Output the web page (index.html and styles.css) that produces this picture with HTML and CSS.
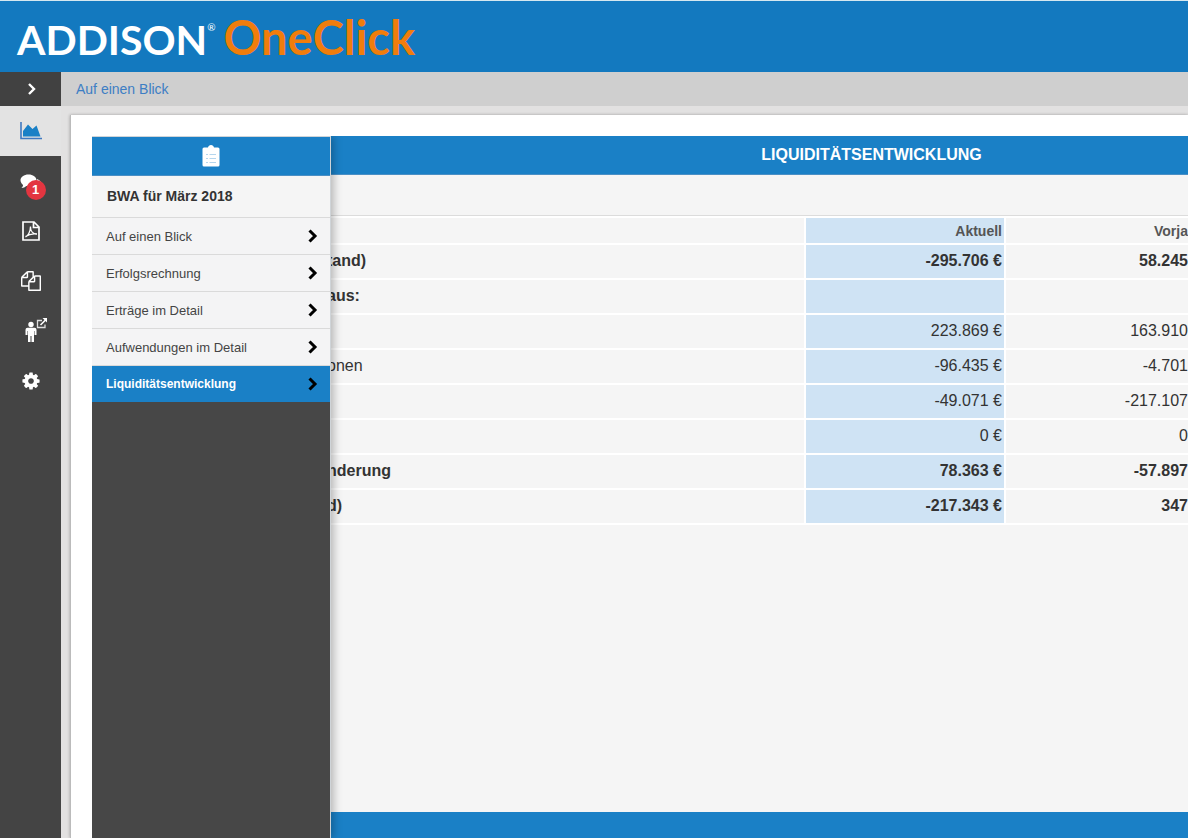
FILE: index.html
```html
<!DOCTYPE html>
<html lang="de">
<head>
<meta charset="utf-8">
<title>ADDISON OneClick</title>
<link rel="stylesheet" href="styles.css">
</head>
<body class="app">
<header class="brand">
  <span class="brand-name">ADDISON<sup class="brand-mark">®</sup></span>
  <span class="brand-product">OneClick</span>
</header>
<div class="shell">
  <nav class="rail" aria-label="Hauptnavigation">
    <button class="rail-toggle" type="button">
      <svg width="10" height="14" viewBox="0 0 10 14"><path d="M3 2l5 5-5 5" fill="none" stroke="#fff" stroke-width="2.400"/></svg>
    </button>
    <a class="rail-item rail-active" href="#">
      <svg width="22" height="18" viewBox="0 0 22 18"><path d="M1 0v16.500h21" fill="none" stroke="#3f78c0" stroke-width="1.600"/><path d="M3 14.500V9l5-6.500 4.500 4.500 4-3.500L20.500 14.500z" fill="#1a80c6"/></svg>
    </a>
    <a class="rail-item" href="#">
      <span class="chat">
        <svg width="22" height="20" viewBox="0 0 22 20"><path d="M17 5c3 1 4.500 3 4.500 5 0 2-1 3-2 4 0 1 1 2 1.500 3-2 0-3.500-1-4.500-1.800-3 .5-6-.2-8-1.700 5 0 9-3 8.500-8.500z" fill="#eee"/><path d="M8.500.5c4.500 0 8 2.500 8 5.800s-3.500 5.800-8 5.800c-.8 0-1.500 0-2.200-.2C5 13 3.500 13.800 1.500 14c.8-.8 1.500-1.800 1.600-3C1.500 9.800.5 8.200.5 6.300.5 3 4 .5 8.500.5z" fill="#fff"/></svg>
        <span class="badge">1</span>
      </span>
    </a>
    <a class="rail-item" href="#">
      <svg width="18" height="20" viewBox="0 0 18 20"><path d="M1 1h11l5 5v13H1zM11.500 1v5.500H17" fill="none" stroke="#fff" stroke-width="1.700"/><path d="M3.500 16c2.500-1 5-5.500 5-10.500M8.500 6c0 4 2.500 7 6.500 7M3.500 15.500c3-2 7-3 11-2.500" fill="none" stroke="#fff" stroke-width="1.300"/></svg>
    </a>
    <a class="rail-item" href="#">
      <svg width="20" height="20" viewBox="0 0 1792 1792"><path fill="#fff" d="M1696 384q40 0 68 28t28 68v1216q0 40-28 68t-68 28h-960q-40 0-68-28t-28-68v-288h-544q-40 0-68-28t-28-68v-672q0-40 20-88t48-76l408-408q28-28 76-48t88-20h416q40 0 68 28t28 68v328q68-40 128-40h416zm-544 213l-299 299h299v-299zm-640-384l-299 299h299v-299zm196 647l316-316v-416h-384v416q0 40-28 68t-68 28h-416v640h512v-256q0-40 20-88t48-76zm956 804v-1152h-384v416q0 40-28 68t-68 28h-416v640h896z"/></svg>
    </a>
    <a class="rail-item" href="#">
      <svg width="34" height="26" viewBox="0 0 34 26"><circle cx="17" cy="6.500" r="2.700" fill="#fff"/><path d="M13.500 9.700h7q2 0 2 2V17h-2v-4h-.5v11h-2.500v-6h-1v6H14V13h-.5v4h-2v-5.300q0-2 2-2z" fill="#fff"/><path d="M28 2.500h-4.500v7h7.500V6.500" fill="none" stroke="#ddd" stroke-width="1.300"/><path d="M26.500 7l5-5" stroke="#fff" stroke-width="1.600"/><path d="M28.500 0H33v4.500z" fill="#fff"/></svg>
    </a>
    <a class="rail-item" href="#">
      <svg width="20" height="20" viewBox="0 0 1792 1792"><path fill="#fff" d="M1152 896q0-106-75-181t-181-75-181 75-75 181 75 181 181 75 181-75 75-181zm512-109v222q0 12-8 23t-20 13l-185 28q-19 54-39 91 35 50 107 138 10 12 10 25t-9 23q-27 37-99 108t-94 71q-12 0-26-9l-138-108q-44 23-91 38-16 136-29 186-7 28-36 28h-222q-14 0-24.500-8.500t-11.500-21.500l-28-184q-49-16-90-37l-141 107q-10 9-25 9-14 0-25-11-126-114-165-168-7-10-7-23 0-12 8-23 15-21 51-66.500t54-70.500q-27-50-41-99l-183-27q-13-2-21-12.500t-8-23.500v-222q0-12 8-23t19-13l186-28q14-46 39-92-40-57-107-138-10-12-10-24 0-10 9-23 26-36 98.500-107.500t94.500-71.500q13 0 26 10l138 107q44-23 91-38 16-136 29-186 7-28 36-28h222q14 0 24.500 8.500t11.500 21.500l28 184q49 16 90 37l142-107q9-9 24-9 13 0 25 10 129 119 165 170 7 8 7 22 0 12-8 23-15 21-51 66.500t-54 70.500q26 50 41 98l183 28q13 2 21 12.500t8 23.500z"/></svg>
    </a>
  </nav>
  <div class="main">
    <div class="crumbs"><a class="crumb" href="#">Auf einen Blick</a></div>
    <main class="card">
      <section class="report">
        <h1 class="report-title">LIQUIDITÄTSENTWICKLUNG</h1>
        <div class="report-tools"></div>
        <table class="figures">
          <thead>
            <tr><th class="label"></th><th class="now">Aktuell</th><th class="before">Vorja</th></tr>
          </thead>
          <tbody>
            <tr class="strong"><td class="label">tand)</td><td class="now">-295.706 €</td><td class="before">58.245</td></tr>
            <tr class="strong"><td class="label">aus:</td><td class="now"></td><td class="before"></td></tr>
            <tr><td class="label"></td><td class="now">223.869 €</td><td class="before">163.910</td></tr>
            <tr><td class="label">onen</td><td class="now">-96.435 €</td><td class="before">-4.701</td></tr>
            <tr><td class="label"></td><td class="now">-49.071 €</td><td class="before">-217.107</td></tr>
            <tr><td class="label"></td><td class="now">0 €</td><td class="before">0</td></tr>
            <tr class="strong"><td class="label">nderung</td><td class="now">78.363 €</td><td class="before">-57.897</td></tr>
            <tr class="strong"><td class="label">d)</td><td class="now">-217.343 €</td><td class="before">347</td></tr>
          </tbody>
        </table>
        <div class="report-foot"></div>
      </section>
      <aside class="menu">
        <div class="menu-head">
          <svg width="18" height="22" viewBox="0 0 18 22"><path d="M2 2.500h4C6.300 1 7.500 0 9 0s2.700 1 3 2.500h4q1.500 0 1.500 1.500v16q0 1.500-1.500 1.500H2Q.5 21.500.5 20V4Q.5 2.500 2 2.500z" fill="#fff"/><path d="M4 9.500h2M4 13.500h2M4 17.500h2M7.500 9.500H14M7.500 13.500H14M7.500 17.500H14" stroke="#b5d6ee" stroke-width="1.200"/></svg>
        </div>
        <h2 class="menu-title">BWA für März 2018</h2>
        <nav class="menu-list" aria-label="BWA">
          <a class="menu-item" href="#">Auf einen Blick<svg class="chevron" viewBox="0 0 10 14"><path d="M1.500 1.500L7 7l-5.500 5.500" /></svg></a>
          <a class="menu-item" href="#">Erfolgsrechnung<svg class="chevron" viewBox="0 0 10 14"><path d="M1.500 1.500L7 7l-5.500 5.500" /></svg></a>
          <a class="menu-item" href="#">Erträge im Detail<svg class="chevron" viewBox="0 0 10 14"><path d="M1.500 1.500L7 7l-5.500 5.500" /></svg></a>
          <a class="menu-item" href="#">Aufwendungen im Detail<svg class="chevron" viewBox="0 0 10 14"><path d="M1.500 1.500L7 7l-5.500 5.500" /></svg></a>
          <a class="menu-item menu-current" href="#">Liquiditätsentwicklung<svg class="chevron" viewBox="0 0 10 14"><path d="M1.500 1.500L7 7l-5.500 5.500" /></svg></a>
        </nav>
      </aside>
    </main>
  </div>
</div>
</body>
</html>
```
FILE: styles.css
```css
* {
  box-sizing: border-box;
}

.app {
  margin: 0;
  min-height: 100vh;
  display: flex;
  flex-direction: column;
  background: #e2e1e1;
  color: #333;
  font-family: "Liberation Sans", Arial, sans-serif;
  font-size: 16px;
}

a {
  text-decoration: none;
}

svg {
  display: block;
}

.brand {
  display: flex;
  align-items: baseline;
  gap: 8px;
  height: 72px;
  padding: 8px 17px 0;
  border-top: 1px solid #d5e8f0;
  background: #1379bf;
  font-family: Lato, sans-serif;
  font-weight: 700;
  line-height: 56px;
  white-space: nowrap;
}

.brand-name {
  color: #fff;
  font-size: 41px;
}

.brand-mark {
  font-size: 10px;
  font-weight: 400;
  line-height: 1;
  vertical-align: 24px;
}

.brand-product {
  color: #f07d0c;
  font-size: 47px;
}

.shell {
  flex: 1;
  display: flex;
}

.rail {
  flex: none;
  width: 61px;
  background: #444;
}

.rail-toggle {
  display: flex;
  align-items: center;
  justify-content: center;
  width: 100%;
  height: 34px;
  padding: 0;
  border: 0;
  background: #414141;
}

.rail-item {
  display: flex;
  align-items: center;
  justify-content: center;
  height: 50px;
}

.rail-active {
  background: #e3e3e3;
}

.chat {
  position: relative;
  margin-top: 6px;
}

.badge {
  position: absolute;
  top: 6px;
  left: 6px;
  width: 20px;
  height: 20px;
  border-radius: 50%;
  background: #e33540;
  color: #fff;
  font-size: 13px;
  font-weight: 700;
  line-height: 20px;
  text-align: center;
}

.main {
  flex: 1;
  min-width: 0;
  display: flex;
  flex-direction: column;
}

.crumbs {
  height: 34px;
  padding-left: 15px;
  background: #cfcfcf;
  font-size: 14px;
  line-height: 34px;
}

.crumb {
  color: #3d7ec4;
}

.card {
  position: relative;
  flex: 1;
  display: flex;
  margin: 9px 0 0 9px;
  padding: 21px 0 0 22px;
  border-left: 1px solid #bbb;
  background: #fff;
  box-shadow: 0 0 3px rgba(0, 0, 0, 0.3);
}

.report {
  flex: 1;
  min-width: 0;
  display: flex;
  flex-direction: column;
  padding-left: 229px;
  background: #f5f5f5;
}

.report-title {
  margin: 0 0 0 -229px;
  height: 39px;
  padding-left: 462px;
  border-bottom: 1px solid #4a8fc5;
  background: #1a80c6;
  color: #fff;
  font-size: 16px;
  font-weight: 700;
  line-height: 37px;
  text-align: center;
}

.report-tools {
  height: 41px;
  border-bottom: 1px solid #dcdcdc;
}

.figures {
  width: 100%;
  border-spacing: 0;
  border-top: 2px solid #fff;
  table-layout: fixed;
  line-height: 18px;
}

.figures th,
.figures td {
  height: 35px;
  padding: 0 2px 2px 0;
  border-bottom: 2px solid #fff;
  text-align: right;
}

.figures th {
  height: 27px;
  padding-bottom: 0;
  color: #555;
  font-size: 14px;
}

.figures .label {
  padding-left: 5px;
  text-align: left;
}

.figures .now {
  width: 200px;
  border-left: 2px solid #fff;
  background: #cfe3f4;
}

.figures .before {
  width: 184px;
  padding-right: 0;
  border-left: 2px solid #fff;
}

.strong {
  font-weight: 700;
}

.report-foot {
  height: 26px;
  margin-top: auto;
  background: #1a80c6;
}

.menu {
  position: absolute;
  top: 21px;
  bottom: 0;
  left: 21px;
  width: 239px;
  border: 1px solid #cfd4d8;
  border-bottom: 0;
  border-left: 0;
  background: #474747;
  box-shadow: 3px 0 8px rgba(0, 0, 0, 0.25);
  clip-path: inset(0 -20px 0 0);
}

.menu-head {
  display: flex;
  align-items: center;
  justify-content: center;
  height: 39px;
  border-bottom: 1px solid #4a8fc5;
  background: #1a80c6;
}

.menu-title {
  margin: 0;
  height: 42px;
  padding-left: 15px;
  border-bottom: 1px solid #dadada;
  background: #f5f5f5;
  font-size: 14px;
  line-height: 41px;
}

.menu-item {
  display: flex;
  align-items: center;
  justify-content: space-between;
  height: 37px;
  padding: 0 12px 0 14px;
  border-bottom: 1px solid #dadada;
  background: #f4f4f5;
  color: #444;
  font-size: 13px;
}

.menu-current {
  height: 36px;
  border-bottom: 0;
  background: #1a80c6;
  color: #fff;
  font-size: 12px;
  font-weight: 700;
}

.chevron {
  width: 10px;
  height: 14px;
  fill: none;
  stroke: #000;
  stroke-width: 3;
}
```
